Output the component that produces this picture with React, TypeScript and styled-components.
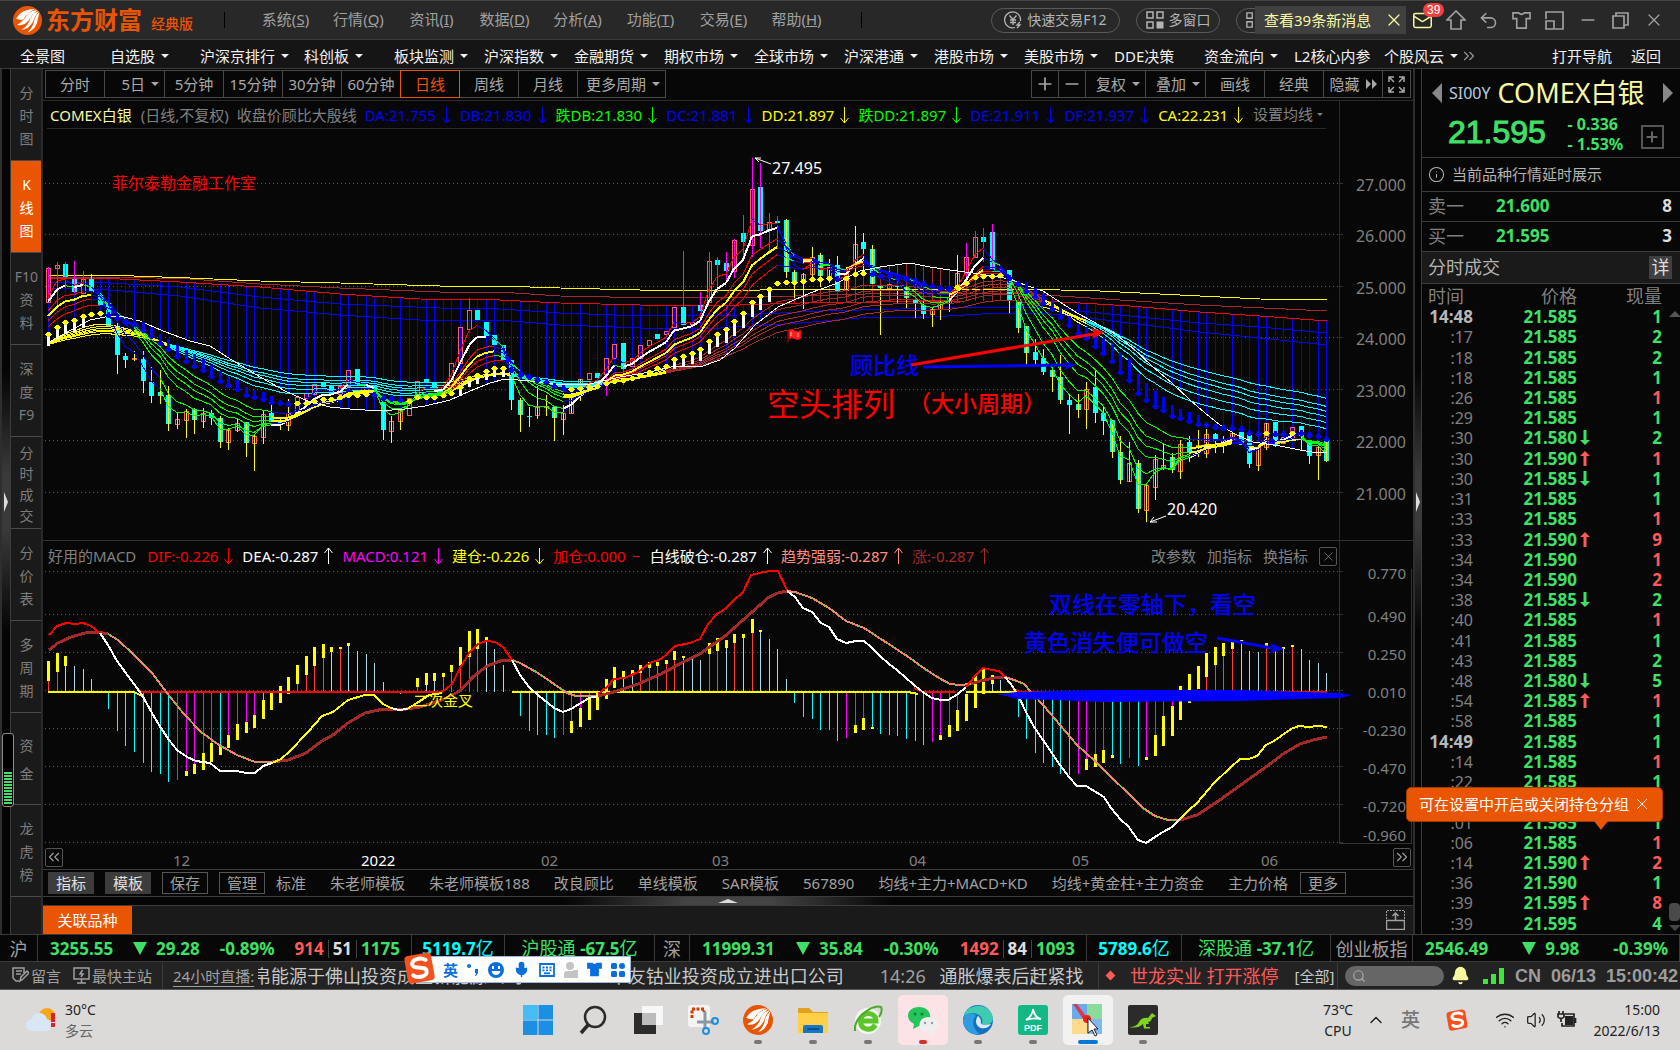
import React from 'react';
import styled, { createGlobalStyle, css } from 'styled-components';
import {
  Undo2, Minus, X, Mail, ChevronsLeft, ChevronsRight,
  Search, Bell, ChevronUp, Wifi, Volume2, Mic, Info, Plus,
} from 'lucide-react';

/* ---------- palette ---------- */
const C = {
  bg: '#070707', bar: '#282828', nav: '#151515', panel: '#1a1a1a', line: '#3c3c3c', dark: '#2a2a2a',
  text: '#c8c8c8', mute: '#808080', mid: '#a0a0a0', orange: '#ea5504', green: '#3fe065', red: '#ff5a5a',
  gold: '#f8f8a0', cyan: '#00ffff', blue: '#0000ff',
};
const FONT = '"Noto Sans", "Noto Sans CJK SC", sans-serif';

const Global = createGlobalStyle`
  * { box-sizing: border-box; }
  html, body { margin: 0; background: ${C.bg}; }
  body { font: 15px/20px ${FONT}; color: ${C.text}; }
  button { font: inherit; color: inherit; background: none; border: 0; padding: 0; margin: 0; white-space: nowrap; cursor: pointer; }
  a { color: inherit; }
  svg { display: block; flex: none; }
`;

const Page = styled.div`display: flex; flex-direction: column; min-height: 100vh; overflow: hidden;`;

/* ---------- title bar ---------- */
const TitleBar = styled.header`
  height: 40px; display: flex; align-items: center; background: ${C.bar};
  border-top: 1px solid #444; border-bottom: 1px solid #3a3a3a; padding: 0 10px 0 13px; color: ${C.mid};
`;
const Brand = styled.div`
  display: flex; align-items: center; gap: 4px; width: 211px; color: ${C.orange};
  b { font-size: 24px; line-height: 30px; }
  small { font-size: 14px; line-height: 18px; margin: 8px 0 0 5px; font-weight: 500; }
`;
const Rule = styled.i`width: 1px; height: 16px; background: #000; flex: none;`;
const Menu = styled.nav`
  display: flex; padding: 0 28px 2px 24px;
  button { width: 73px; }
`;
const Spacer = styled.span`flex: 1;`;
const Pill = styled.button<{ $w: number }>`
  width: ${p => p.$w}px; height: 25px; border: 1px solid #5a5a5a; border-radius: 13px; margin-right: 16px;
  display: flex; align-items: center; justify-content: center; gap: 5px; font-size: 14px; color: #b4b4b4;
`;
const NoticeSlot = styled.div`
  position: relative; width: 170px; height: 28px; display: flex; align-items: center;
  ${Pill} { justify-content: flex-start; padding-left: 9px; }
`;
const Notice = styled.div`
  position: absolute; right: 0; top: 0; width: 151px; height: 28px; background: #404040; color: ${C.gold};
  display: flex; align-items: center; justify-content: space-between; padding: 0 2px 0 9px;
`;
const IconBtn = styled.button`
  width: 33px; height: 30px; display: flex; align-items: center; justify-content: center; position: relative; color: ${C.mid};
`;
const Badge = styled.span`
  position: absolute; left: 17px; top: -2px; padding: 0 4px; border-radius: 7px; background: #f43f3f; color: #fff;
  font: 12px/14px "Liberation Sans", sans-serif;
`;

/* ---------- market nav ---------- */
const NavBar = styled.nav`
  height: 29px; display: flex; align-items: center; background: ${C.nav}; border-bottom: 1px solid ${C.line};
  padding: 3px 19px 0 20px; color: #f0f0f0;
`;
const NavItem = styled.button<{ $w?: number }>`
  width: ${p => p.$w ?? 90}px; display: flex; align-items: center; gap: 6px; flex: none;
`;
const Tri = styled.i<{ $s?: number }>`
  border: ${p => p.$s ?? 4}px solid transparent; border-top-color: currentColor; border-bottom: 0; flex: none;
`;
const NavEnd = styled.div`display: flex; gap: 19px; margin-left: auto;`;

/* ---------- workspace ---------- */
const Body = styled.main`flex: 1; display: flex; background: ${C.bg};`;
const Gutter = styled.div<{ $w: number }>`
  width: ${p => p.$w}px; flex: none; border-left: 2px solid #2e2e2e; border-right: 1px solid ${C.line};
  background: linear-gradient(#050505 35%, #3a3a3a 47%, #3a3a3a 53%, #050505 65%);
  display: flex; flex-direction: column; align-items: center; padding-top: 423px; position: relative;
`;
const Handle = styled.i`border: 10px solid transparent; border-left: 4px solid #ddd; border-right: 0;`;
const Meter = styled.div`
  position: absolute; left: 0; top: 664px; width: 12px; height: 74px; border: 1px solid #8a8a8a; border-radius: 3px;
  background: #000; padding: 38px 1px 2px;
  &::after { content: ''; display: block; height: 100%; background: repeating-linear-gradient(${C.green} 0 2px, #000 2px 3px); }
`;
const Side = styled.aside`width: 32px; flex: none; background: ${C.panel}; border-right: 2px solid ${C.dark};`;
const SideTab = styled.button<{ $on?: boolean; $lh: number }>`
  display: flex; flex-direction: column; align-items: center; justify-content: center; width: 100%; height: 92px;
  border-bottom: 1px solid #4a4a4a; line-height: ${p => p.$lh}px; color: ${p => (p.$on ? '#fff' : '#7d7d7d')};
  background: ${p => (p.$on ? C.orange : 'transparent')}; font-size: 14px; padding: 2px 0 0 1px;
`;
const Center = styled.section`flex: 1; min-width: 0; display: flex; flex-direction: column;`;

const Toolbar = styled.div`height: 32px; display: flex; padding: 1px 2px 3px; justify-content: space-between; border-bottom: 1px solid ${C.dark};`;
const Group = styled.div`display: flex; > * + * { margin-left: -1px; }`;
const Tool = styled.button<{ $w: number; $on?: boolean; $drop?: boolean }>`
  width: ${p => p.$w}px; height: 28px; border: 1px solid ${p => (p.$on ? C.orange : '#484848')};
  color: ${p => (p.$on ? C.orange : '#a8a8a8')}; position: relative; z-index: ${p => (p.$on ? 1 : 0)};
  display: flex; align-items: center; gap: 6px;
  justify-content: ${p => (p.$drop ? 'flex-end' : 'center')}; padding-right: ${p => (p.$drop ? 5 : 0)}px;
`;

const Legend = styled.div<{ $h: number }>`
  height: ${p => p.$h}px; display: flex; flex: none;
`;
const LegendText = styled.div`
  flex: 1; min-width: 0; display: flex; align-items: center; gap: 8px; overflow: hidden; white-space: nowrap;
  padding: 2px 2px 0 5px; border-right: 1px solid ${C.dark}; position: relative;
  > :first-child { margin-right: 3px; }
`;
const Under = styled(LegendText)`
  padding: 0 2px 0 7px;
  > :first-child { margin-right: 1px; }
  &::after { content: ''; position: absolute; left: 4px; right: 13px; bottom: 0; border-bottom: 1px solid ${C.dark}; }
`;
const AxisGap = styled.div`width: 73px; flex: none;`;
const Val = styled.span<{ $c: string }>`
  color: ${p => p.$c}; display: inline-flex; align-items: center; gap: 5px; flex: none;
`;
const MaButton = styled.button`
  position: absolute; right: 0; top: 3px; width: 86px; background: ${C.bg}; color: ${C.mute}; padding-right: 10px;
  display: flex; align-items: center; gap: 4px;
`;
const LegendEnd = styled.div`margin-left: auto; display: flex; align-items: center; gap: 11px; color: ${C.mute};`;
const Square = styled.button`
  width: 18px; height: 19px; border: 1px solid #555; border-radius: 2px; display: flex; align-items: center; justify-content: center;
  color: ${C.mid}; flex: none;
`;
const Plot = styled.svg`
  width: 100%; height: auto; overflow: visible; font-family: ${FONT}; font-size: 15px;
`;
const DateRow = styled.div`height: 26px; display: flex; align-items: center; padding: 1px 2px 0; border-bottom: 1px solid ${C.line};`;
const DatePlot = styled.svg`flex: 1; min-width: 0; height: 24px; overflow: visible; font-family: ${FONT}; font-size: 15px;`;

const Templates = styled.div`
  height: 27px; display: flex; align-items: center; gap: 24px; padding: 0 5px; color: ${C.mid}; border-bottom: 1px solid ${C.line};
`;
const TplGroup = styled.div`display: flex; gap: 11px; margin-right: -13px;`;
const TplBtn = styled.button<{ $fill?: boolean }>`
  width: 46px; height: 22px; line-height: 20px; border: 1px solid ${p => (p.$fill ? C.line : '#555')};
  background: ${p => (p.$fill ? C.line : 'transparent')}; color: ${p => (p.$fill ? '#e0e0e0' : C.mid)};
`;
const MoreBtn = styled(TplBtn)`margin-left: -12px;`;
const HSplit = styled.div`
  height: 9px; display: flex; justify-content: center; align-items: center; border-bottom: 1px solid ${C.line};
  background: linear-gradient(90deg, #050505 38%, #444 47%, #444 53%, #050505 62%);
`;
const Up = styled.i`border: 10px solid transparent; border-bottom: 4px solid #ddd; border-top: 0;`;
const Related = styled.div`
  flex: 1; min-height: 28px; display: flex; align-items: center; justify-content: space-between; background: ${C.panel}; padding-right: 8px;
`;
const RelTab = styled.button`align-self: stretch; width: 89px; background: ${C.orange}; color: #fff;`;

/* ---------- quote panel ---------- */
const Quote = styled.aside`width: 258px; flex: none; display: flex; flex-direction: column; position: relative;`;
const QHead = styled.div`
  height: 89px; border-bottom: 1px solid ${C.line}; padding: 7px 7px 0 10px;
`;
const QName = styled.div`
  display: flex; align-items: center; gap: 7px; color: #b9cbe0; font-size: 16px; height: 34px;
  h1 { margin: 0; font-size: 27px; line-height: 34px; font-weight: 400; color: ${C.gold}; }
`;
const QPrice = styled.div`
  display: flex; align-items: center; justify-content: space-between; padding: 0 9px 0 16px; color: ${C.green};
  strong { font: 32px/45px "Liberation Sans", sans-serif; -webkit-text-stroke: 1px ${C.green}; }
`;
const Change = styled.div`font-weight: 700; font-size: 16px; line-height: 20px; white-space: pre; padding: 3px 0 0 4px;`;
const AddBtn = styled(Square)`width: 23px; height: 24px; border-radius: 0; border-width: 2px; color: #666; margin-top: 8px;`;
const Side2 = styled.i<{ $left?: boolean }>`
  border: 10px solid transparent; flex: none;
  ${p => p.$left ? css`border-right-color: #888; border-left: 0;` : css`border-left-color: #888; border-right: 0; margin-left: auto;`}
`;
const QLine = styled.div<{ $h: number; $bg?: string }>`
  height: ${p => p.$h}px; display: flex; align-items: center; gap: 7px; padding: 0 8px 1px 6px; background: ${p => p.$bg ?? 'transparent'};
  border-bottom: 1px solid ${C.line}; font-size: ${p => (p.$h > 31 ? (p.$bg ? 18 : 15) : 18)}px; color: ${p => (p.$h === 30 ? C.mute : '#b4b4b4')};
  b { font-size: 17px; color: ${C.green}; width: 155px; margin-left: 25px; }
  em { font-style: normal; font-weight: 700; font-size: 17px; color: #ddd; margin-left: auto; }
`;
const Detail = styled.button`margin-left: auto; width: 23px; height: 23px; line-height: 22px; background: #404040; color: #ddd;`;
const TradeWrap = styled.div`flex: 1; display: flex;`;
const Trades = styled.table`
  flex: 1; border-collapse: collapse; table-layout: fixed; line-height: 20px; font-size: 17px; height: 650px;
  th { font-weight: 400; font-size: 18px; color: ${C.mute}; height: 23px; }
  th, td { padding: 0; text-align: right; }
  th:first-child { text-align: left; padding-left: 6px; }
  thead th:nth-child(2) { padding-right: 14px; }
`;
const Time = styled.td<{ $full?: boolean }>`
  font-size: ${p => (p.$full ? 17 : 16)}px; color: ${p => (p.$full ? '#b8b8b8' : C.mute)}; font-weight: ${p => (p.$full ? 700 : 400)};
  width: 51px;
`;
const Price = styled.td`color: ${C.green}; font-weight: 700; width: 118px;
  div { display: flex; align-items: center; justify-content: flex-end; gap: 2px; }
  svg, div > i { width: 12px; }
`;
const Vol = styled.td<{ $up: boolean }>`color: ${p => (p.$up ? C.red : C.green)}; font-weight: 700;`;
const ScrollBar = styled.div`
  width: 18px; display: flex; flex-direction: column; align-items: center; padding: 27px 0 3px 7px; color: #666;
  i:first-child { border: 6px solid transparent; border-bottom-color: #555; border-top: 0; }
  span { width: 11px; height: 18px; border-radius: 4px; background: #4a4a4a; margin-top: auto; }
  i:last-child { border: 6px solid transparent; border-top-color: #444; border-bottom: 0; margin-top: 4px; }
`;
const Tip = styled.div`
  position: absolute; left: -16px; bottom: 112px; width: 257px; height: 35px; border-radius: 5px; background: ${C.orange}; color: #fff;
  display: flex; align-items: center; justify-content: space-between; padding: 0 11px 1px 12px; border: 1px solid #a33b00;
  &::after { content: ''; position: absolute; left: 187px; top: 33px; border: 7px solid transparent; border-top: 9px solid ${C.orange}; border-bottom: 0; }
`;

/* ---------- bottom bars ---------- */
const Ticker = styled.div`
  height: 27px; display: grid; grid-template-columns: 38fr 374fr 93fr 150fr 35fr 397fr 95fr 149fr 82fr 267fr;
  border-top: 1px solid ${C.line}; font-size: 18px; line-height: 26px; white-space: nowrap;
`;
const Cell = styled.div<{ $c?: string }>`
  display: flex; align-items: center; justify-content: center; gap: 6px; border-right: 1px solid ${C.line};
  color: ${p => p.$c ?? C.mid}; min-width: 0;
  b { font-size: 17px; }
`;
const IndexCell = styled(Cell)`justify-content: space-between; padding: 0 11px 0 12px; font-weight: 700; font-size: 17px; color: ${C.green};`;
const Down = styled.span`
  display: inline-flex; align-items: center; gap: 9px;
  &::before { content: ''; border: 7px solid transparent; border-top: 13px solid ${C.green}; border-bottom: 0; }
`;
const Counts = styled.span`
  display: flex; gap: 4px;
  span + span { border-left: 1px solid #444; padding-left: 4px; line-height: 18px; }
  span { line-height: 18px; }
`;
const Tint = styled.span<{ $c: string }>`color: ${p => p.$c};`;

const News = styled.div`
  height: 29px; display: flex; align-items: center; background: #232323; border-top: 1px solid ${C.line}; position: relative;
  color: ${C.mid}; white-space: nowrap; border-bottom: 1px solid #555; padding-right: 2px;
`;
const NewsBtn = styled.button`display: flex; align-items: center; gap: 2px; margin-left: 12px;`;
const Live = styled.a`margin-left: 10px; padding-left: 10px; border-left: 1px solid ${C.line}; line-height: 26px; width: 96px; text-underline-offset: 4px;`;
const Feed = styled.div`
  flex: 1; min-width: 0; overflow: hidden; display: flex; font-size: 18px; line-height: 26px; color: ${C.text};
  span { flex: none; } time { flex: none; color: ${C.mid}; }
  > :first-child { margin-left: -5px; }
`;
const Hot = styled.div`
  display: flex; align-items: center; gap: 16px; width: 240px; padding-left: 8px; border-left: 1px solid ${C.line}; border-right: 1px solid ${C.line};
  color: ${C.red}; font-size: 18px; line-height: 26px;
  i { width: 7px; height: 7px; background: ${C.red}; transform: rotate(45deg); }
  a { font-size: 15px; color: ${C.text}; text-decoration: none; }
`;
const Find = styled.label`
  width: 99px; height: 20px; border-radius: 10px; background: #666; display: flex; align-items: center; margin: 0 7px; padding-left: 7px;
  input { width: 70px; border: 0; background: none; outline: 0; color: #fff; }
`;
const Signal = styled.svg`margin-left: 13px;`;
const Clock = styled.div`display: flex; gap: 10px; margin-left: 10px; font: bold 18px/26px "Liberation Sans", sans-serif; color: #9c9c9c;`;
const Ime = styled.div`
  position: absolute; left: 412px; top: -6px; width: 219px; height: 27px; background: #fff; border: 1px solid #9db9e0;
  display: flex; align-items: center; justify-content: space-between; padding: 0 5px 0 30px; color: #0a6fdc;
  button { font-weight: 700; display: flex; }
`;
const ImeLogo = styled.svg`position: absolute; left: -9px; top: -6px;`;

const Taskbar = styled.footer`
  height: 60px; display: flex; align-items: center; background: #dbdad9; color: #222; font-size: 14px; line-height: 21px;
  justify-content: space-between; padding: 0 20px;
`;
const Weather = styled.div`display: flex; align-items: center; gap: 9px; flex: 1 1 0; svg { margin-left: 6px; } span { color: #666; }`;
const Apps = styled.div`display: flex; gap: 5px; flex: none;`;
const AppBtn = styled.button<{ $bg?: string; $dot?: string }>`
  width: 50px; height: 50px; border-radius: 5px; background: ${p => p.$bg ?? 'transparent'}; position: relative;
  display: flex; align-items: center; justify-content: center;
  &::after {
    content: ''; position: absolute; bottom: 1px; height: 4px; border-radius: 2px; width: ${p => (p.$dot === '#0078d4' ? 20 : 8)}px;
    background: ${p => p.$dot ?? 'transparent'};
  }
`;
const Tray = styled.div`flex: 1 1 0; display: flex; align-items: center; justify-content: flex-end; gap: 11px;`;
const TrayIcons = styled.div`display: flex; gap: 11px; margin-left: 16px;`;
const TrayText = styled.div<{ $right?: boolean; $w: number }>`text-align: ${p => (p.$right ? 'right' : 'center')}; width: ${p => p.$w}px;`;
const TrayIme = styled.b`font-size: 19px; color: #777; margin: 0 15px 0 4px; font-weight: 500;`;

/* ---------- market data ---------- */
// [body top, body bottom, wick top, wick bottom, kind]; kind: r hollow rise, c solid fall, capital = magenta wick
type Bar = [number, number, number, number, string];
const bars: Bar[] = [
  [444,545,440,545,'R'],[436,444,427,560,'R'],[432,472,425,505,'C'],[477,515,423,520,'C'],[477,520,453,495,'R'],[477,515,462,515,'c'],
  [525,555,525,555,'c'],[550,622,550,622,'c'],[618,704,600,762,'c'],[708,720,700,743,'c'],[714,718,692,722,'r'],[716,783,692,820,'c'],
  [786,828,741,849,'c'],[816,827,750,852,'c'],[826,911,798,933,'c'],[898,911,880,927,'r'],[873,900,868,954,'r'],[868,900,864,942,'c'],
  [880,902,864,924,'r'],[880,893,870,915,'c'],[894,966,888,985,'c'],[930,965,924,990,'r'],[909,931,894,936,'r'],[906,969,906,1011,'c'],
  [948,970,942,1052,'r'],[882,952,873,972,'r'],[879,906,855,906,'c'],[900,915,894,930,'c'],[880,916,837,933,'r'],[830,880,830,880,'r'],
  [820,835,820,835,'r'],[793,823,793,823,'r'],[790,800,790,800,'c'],[798,822,798,822,'c'],[797,823,797,823,'r'],[751,797,751,797,'r'],
  [747,796,747,796,'c'],[795,810,795,810,'r'],[794,822,794,822,'c'],[845,930,845,960,'c'],[902,932,887,968,'r'],[870,902,870,930,'r'],
  [835,884,835,884,'r'],[782,835,782,835,'r'],[778,786,778,786,'c'],[786,808,786,808,'c'],[800,812,800,812,'r'],[730,800,730,800,'r'],
  [622,730,622,730,'r'],[571,626,535,571,'R'],[570,600,570,600,'c'],[606,648,606,648,'c'],[645,675,645,675,'c'],[675,720,675,720,'c'],
  [720,840,720,870,'c'],[840,885,834,936,'c'],[887,890,861,921,'c'],[861,886,799,897,'r'],[858,861,825,888,'r'],[861,894,858,963,'c'],
  [880,898,855,945,'r'],[832,880,800,880,'r'],[778,800,778,843,'r'],[760,778,760,778,'r'],[759,774,759,774,'c'],[715,762,760,828,'R'],
  [673,715,673,715,'r'],[669,747,747,795,'C'],[715,738,715,738,'r'],[676,715,676,715,'r'],[661,676,661,676,'r'],[642,656,642,656,'c'],
  [634,643,634,643,'r'],[562,622,562,622,'r'],[560,614,393,560,'C'],[605,612,605,612,'r'],[555,572,516,570,'C'],[424,545,396,545,'R'],
  [420,434,412,520,'C'],[429,453,397,490,'C'],[361,453,357,474,'R'],[339,365,285,422,'C'],[208,374,114,412,'R'],[201,332,129,384,'C'],
  [307,330,279,402,'R'],[303,308,288,388,'C'],[300,456,297,474,'c'],[456,486,450,537,'c'],[462,480,460,566,'r'],[411,462,381,470,'r'],
  [405,468,399,500,'c'],[440,475,417,490,'r'],[435,513,408,515,'c'],[460,510,441,510,'r'],[373,430,318,470,'r'],[366,386,339,450,'c'],
  [387,491,375,491,'c'],[498,503,498,645,'c'],[493,503,493,503,'r'],[496,500,496,548,'c'],[501,535,501,563,'c'],[538,548,538,593,'c'],
  [555,582,540,597,'c'],[568,582,560,620,'r'],[550,566,540,600,'r'],[530,548,520,575,'r'],[460,510,405,515,'r'],[411,460,369,500,'R'],
  [351,411,333,415,'R'],[351,365,324,425,'C'],[336,450,312,450,'C'],[452,456,435,475,'C'],[450,540,450,579,'c'],[543,624,543,638,'c'],
  [617,699,617,735,'c'],[696,720,657,732,'c'],[714,755,687,765,'c'],[750,771,742,816,'c'],[771,840,705,852,'c'],[840,855,822,942,'c'],
  [852,870,822,894,'c'],[808,868,787,927,'r'],[801,879,753,909,'c'],[879,903,858,945,'c'],[899,996,899,1014,'c'],[996,1080,948,1092,'c'],
  [1030,1084,966,1086,'r'],[1028,1166,1020,1179,'c'],[1095,1171,1095,1205,'r'],[1018,1100,1005,1140,'r'],[1036,1040,972,1050,'r'],
  [1010,1050,999,1058,'c'],[973,1052,960,1077,'r'],[966,996,948,1026,'c'],[975,978,930,1010,'r'],[943,998,927,1014,'r'],[942,960,940,1000,'c'],
  [960,975,948,1000,'r'],[940,960,935,960,'r'],[936,975,936,975,'c'],[945,1032,945,1044,'c'],[980,1034,980,1053,'r'],[910,980,910,990,'r'],
  [905,975,905,980,'c'],[950,970,950,970,'r'],[922,960,922,960,'r'],[918,950,918,990,'c'],[963,1007,963,1032,'c'],[980,1005,980,1080,'r'],
  [962,1023,960,1026,'c'],
];
const X0 = 48.3, STEP = 8.577;
const px = (i: number) => Math.round(X0 + STEP * i);
const py = (v: number) => Math.round(120 + v / 3);
const closes = bars.map(b => (b[4].toLowerCase() === 'r' ? b[0] : b[1]));
const ema = (n: number, seed: number) => {
  let e = seed; const k = 2 / (n + 1);
  return closes.map((c, i) => (i === 0 ? e : (e = c * k + e * (1 - k))));
};
const shortLines = ([[3, 530], [5, 545], [8, 572], [10, 588], [12, 602], [15, 620]] as const).map(([n, s]) => ema(n, s));
const longLines = ([[30, 668], [35, 669], [40, 670], [45, 671], [50, 672], [60, 674]] as const).map(([n, s]) => ema(n, s));

// trend markers, one number per bar; dots with a stem
const marks = [
  641,622,606,600,588,582,579,585,595,605,612,630,648,668,688,708,723,738,749,767,782,795,807,826,831,838,845,848,852,848,850,842,838,838,
  830,825,825,822,825,833,838,840,842,832,830,832,825,818,800,775,765,752,744,744,750,765,772,780,787,798,805,806,803,801,798,790,783,780,
  773,766,757,745,737,718,708,698,686,663,641,627,602,578,545,527,507,489,486,486,483,477,477,474,477,475,463,460,463,468,468,473,477,483,
  492,497,503,508,500,490,470,468,468,465,475,492,512,532,548,568,592,615,638,655,678,698,722,757,780,818,840,858,870,888,895,903,913,915,
  922,925,925,927,939,942,940,942,942,940,940,946,948,957,
];
const downRanges = [[7, 28], [38, 41], [54, 60], [92, 92], [96, 105], [112, 141], [143, 144], [146, 149]];
const isDown = (i: number) => downRanges.some(([a, b]) => i >= a && i <= b);
const stem = (i: number) => {
  if (i >= 10 && i <= 26) return 36 - Math.abs(17 - i) * 2;
  if (i >= 114 && i <= 134) return 28 + Math.max(0, 34 - Math.abs(126 - i) * 6);
  if (i < 5) return 36;
  if (i >= 48 && i <= 53) return 26;
  if (i >= 73 && i <= 84) return 46 - Math.abs(81 - i) * 2;
  return 8;
};

type Pt = [number, number];
const pts = (s: string): Pt[] => s.split(' ').map(p => p.split(',').map(Number) as Pt);
const at = (line: Pt[], x: number) => {
  for (let i = 1; i < line.length; i++) if (x <= line[i][0]) {
    const [a, b] = line[i - 1], [c, d] = line[i];
    return b + ((d - b) * (x - a)) / (c - a);
  }
  return line[line.length - 1][1];
};
const white = pts('48,343 60,336 75,328 90,320 105,317 120,316 140,321 163,331 190,341 210,346 235,362 262,378 285,391 310,402 330,407 350,409 380,411 405,409 425,406 450,400 470,391 490,383 505,379 530,381 560,385 590,384 620,377 650,372 675,366 700,367 720,360 735,348 755,325 778,307 810,293 835,284 860,271 880,267 910,263 930,267 950,270 980,274 1010,279 1025,285 1043,291 1060,302 1077,313 1092,321 1117,335 1135,350 1153,367 1172,383 1190,400 1205,413 1220,425 1235,434 1253,442 1280,446 1300,450 1312,452 1327,452');
const redLong = pts('48,278 120,279 180,282 260,287 340,294 420,299 500,300 560,303 640,305 700,306 740,305 800,303 880,302 960,301 1040,301 1080,303 1130,306 1200,312 1260,316 1327,321');
const yellowLong = '48,275.5 120,275.500 190,278 260,281 340,283 440,286 500,286 560,288 640,290 760,290 900,289.500 1000,289.500 1060,290 1100,291 1140,293 1200,296 1260,299 1327,300';
const longPaths: [string, string][] = [
  ['#a52a2a', '48,277 120,277 190,279 260,284 340,288 440,292 500,292 560,296 660,298 760,297 900,293 1000,293 1060,296 1120,300 1200,305 1327,311'],
  ['#0000ff', '48,282 110,283 180,287 260,297 340,304 440,308 500,309 560,313 640,316 740,315 820,311 900,309 960,307 1040,307 1100,313 1160,319 1200,323 1260,327 1327,333'],
  ['#0000ff', '48,288 110,290 180,296 260,308 340,315 420,320 500,320 560,325 640,328 720,328 800,323 860,318 930,317 1000,313 1040,313 1080,317 1130,323 1200,332 1260,338 1327,345'],
];

// MACD histogram: [index, tip, colour, highlight from, highlight to]
const hist: [number, number, string, number?, number?][] = [
  [0,363,'r',363,422],[1,339,'r',339,395],[2,348,'l',348,377],[3,378,'l'],[4,387,'l'],[5,417,'l'],[7,507,'c'],[8,573,'c'],[9,618,'c'],
  [10,636,'c'],[11,669,'c'],[12,696,'c'],[13,702,'c'],[14,726,'c'],[15,720,'m'],[16,708,'m',693,708],[17,702,'m',672,702],[18,690,'m',639,690],
  [19,666,'m',609,666],[20,645,'c',618,645],[21,624,'m',585,624],[22,600,'m',552,600],[23,579,'m',546,579],[24,564,'m',525,564],
  [25,537,'c',480,537],[26,510,'c',458,510],[27,489,'y',437,489],[28,410,'y',410,462],[29,375,'r',375,432],[30,348,'r',348,405],
  [31,321,'r',321,378],[32,312,'r',312,354],[33,321,'l',321,336],[34,321,'r',321,324],[35,309,'l',309,318],[36,333,'l'],[37,342,'l'],
  [38,369,'l'],[39,426,'l'],[41,462,'c'],[43,414,'r',414,441],[44,399,'l',399,435],[45,399,'l',399,423],[46,399,'r',399,411],[47,375,'r',375,396],
  [48,321,'r',321,378],[49,273,'r',273,350],[50,267,'r',267,327],[51,291,'l',291,303],[52,327,'l'],[53,375,'l'],[55,528,'c'],[56,573,'c'],
  [57,585,'c'],[58,585,'c'],[59,594,'c'],[60,585,'m'],[61,579,'m',543,579],[62,561,'m',504,561],[63,540,'m',477,540],[64,510,'m',458,510],
  [65,417,'y',417,477],[66,381,'y',381,444],[67,393,'l',393,417],[68,390,'l',390,405],[69,375,'r',375,400],[70,366,'r',366,385],
  [71,366,'r',366,378],[72,360,'r',360,372],[73,333,'r',333,360],[74,348,'l',348,354],[75,357,'l'],[76,360,'l'],[77,309,'r',309,342],
  [78,294,'r',294,333],[79,300,'l',300,324],[80,282,'r',282,309],[81,282,'l',282,294],[82,237,'r',237,279],[83,270,'l',270,276],[84,297,'l'],
  [85,327,'l'],[86,417,'l'],[87,489,'c'],[88,531,'c'],[89,537,'c'],[90,570,'c'],[91,570,'c'],[92,603,'c'],[93,594,'m'],[94,579,'m',555,579],
  [95,570,'m',534,570],[96,567,'c',561,567],[97,582,'c'],[98,585,'c'],[99,588,'c'],[100,597,'c'],[101,603,'c'],[102,615,'c'],[103,606,'m'],
  [104,600,'m',585,600],[105,591,'m',555,591],[106,573,'m',510,573],[107,543,'y',461,543],[108,504,'y',408,504],[109,381,'y',381,462],
  [110,405,'l',405,432],[111,420,'l'],[113,531,'c'],[114,597,'c'],[115,639,'c'],[116,669,'c'],[117,681,'c'],[118,702,'c'],[119,705,'c'],
  [120,702,'m'],[121,690,'m',657,690],[122,681,'m',642,681],[123,669,'m',630,669],[124,654,'c',645,654],[125,672,'c'],[126,654,'m'],
  [127,678,'c'],[128,660,'m',651,660],[129,648,'m',585,648],[130,618,'m',528,618],[131,588,'m',498,588],[132,540,'y',438,540],
  [133,402,'y',402,489],[134,378,'y',378,447],[135,339,'r',339,411],[136,321,'r',321,375],[137,309,'r',309,348],[138,306,'r',306,327],
  [139,300,'l',300,306],[140,333,'l'],[141,336,'l'],[142,309,'r',309,318],[143,318,'l',318,324],[144,321,'l',321,324],[145,315,'r',315,321],
  [146,327,'l'],[147,360,'l'],[148,369,'l'],[149,399,'l'],
];
const histColor: Record<string, string> = { r: '#ff3c3c', l: '#add8e6', c: '#00ffff', m: '#ff00ff', y: '#ffff00' };
const my = (v: number) => Math.round(540 + v / 3);

const dif: [string, string][] = [
  ['#f00', '49,635 57,626 66,623 75,624 83,623 91,626 100,633'],
  ['#fff', '100,633 108,645 117,661 134,684 142,695 152,713 159,725 169,740 177,750 187,757 196,761 210,763 220,771 237,771 246,773 255,773 263,766 272,763'],
  ['#ff0', '272,763 281,759 290,751 308,732 322,716 333,712 348,700 365,695 374,695 383,704 391,708'],
  ['#fff', '391,708 399,710 407,709'],
  ['#ff0', '407,709 417,703 429,695 442,693'],
  ['#f00', '442,692 452,684 460,668 469,653 478,644 486,641 495,642 503,647 512,660'],
  ['#fff', '512,660 520,675 529,687 538,695 554,708 563,712 571,709 589,698 598,696'],
  ['#f00', '598,694 607,687 614,679 625,678 638,672 650,663 661,659 668,653 675,646 690,643 700,639 708,624 717,614 725,609 734,600 743,592 751,575 760,573 769,571 778,571 787,590'],
  ['#fff', '787,591 795,597 803,608 812,612 821,623 829,627 837,639 846,643 856,641 864,641 871,647 880,656 889,664 897,670 914,685 924,693 932,698 941,700 948,700 958,694 966,687'],
  ['#f00', '966,687 975,676 983,668 992,670 999,671 1005,677'],
  ['#fff', '1005,677 1010,683 1017,693 1026,712 1034,727 1043,740 1060,765 1069,777 1077,786 1086,786 1104,797 1111,808 1121,820 1128,826 1138,840 1146,843 1155,837 1163,832 1172,827 1180,819'],
  ['#ff0', '1180,819 1189,810 1197,803 1214,783 1231,767 1240,759 1249,759 1257,756 1266,745 1274,741 1291,729 1299,726 1308,727 1318,726 1327,727'],
];
const deaUp = [
  '49,650 58,643 71,637 85,633 98,632 108,634',
  '272,762 288,760 306,753 322,741 333,735 348,723 365,713 383,709 406,709 420,707 442,700 460,691 473,677 487,666 503,660 512,660',
  '598,696 614,692 638,684 661,674 683,662 700,654 708,648 725,636 743,620 760,605 769,597 778,593 787,591',
  '971,684 980,681 994,678 1005,677',
  '1180,820 1197,815 1214,804 1231,792 1249,779 1266,767 1283,754 1300,744 1313,740 1327,737',
];
const deaDown = [
  '108,634 118,640 134,655 152,673 167,693 183,713 201,732 219,745 237,755 255,762 272,762',
  '512,660 520,663 538,673 554,684 567,693 576,696 589,696 598,696',
  '787,591 795,592 812,598 829,608 846,621 864,628 884,641 907,656 925,669 939,678 950,684 959,685 971,684',
  '1005,677 1017,681 1024,684 1031,692 1044,706 1060,725 1077,745 1095,761 1111,777 1129,794 1143,808 1155,816 1168,820 1180,820',
];

/* ---------- small drawings ---------- */
const Arrow = ({ dir }: { dir: string }) => (
  <svg width="11" height="18" viewBox="0 0 11 18" fill="none" stroke="currentColor">
    {dir === 'd' && <path d="M5.500 1v16M1.500 12l4 5 4-5" />}
    {dir === 'u' && <path d="M5.500 17V1M1.500 6l4-5 4 5" />}
    {dir === '-' && <path d="M2 9.500h7" />}
  </svg>
);
const TradeArrow = ({ up }: { up: boolean }) => (
  <svg width="10" height="16" viewBox="0 0 10 16" fill={up ? C.red : C.green}>
    {up ? <path d="M5 0l5 5H6.500v10h-3V5H0z" /> : <path d="M5 15l5-5H6.500V0h-3v10H0z" />}
  </svg>
);
const Swirl = ({ s }: { s: number }) => (
  <svg width={s} height={s} viewBox="0 0 28 28">
    <circle cx="14" cy="14" r="14" fill={C.orange} />
    <g fill="#fff">
      <path d="M3 12Q8 3 22 3Q14 6 10 13Q6 14 3 12z" />
      <path d="M4 18Q10 15 14 8Q18 4 23.500 4Q18 8 15 14Q10 20 4 18z" />
      <path d="M8 23Q15 19 17 11Q20 6 25 5Q21 9 19.500 15Q15 23 8 23z" />
      <path d="M14 25.500Q20 20 21 12Q22.500 8 25.500 6Q24 12 23 17Q20 24 14 25.500z" />
    </g>
  </svg>
);
const ShirtIcon = ({ fill = 'none', s = 20 }: { fill?: string; s?: number }) => (
  <svg width={s} height={s} viewBox="0 0 20 20" fill={fill} stroke="currentColor" strokeWidth="1.700">
    <path d="M1 2h6q3 3 6 0h6v6h-4v10H5V8H1z" />
  </svg>
);
const SogouPath = () => (
  <path d="M23 8C18 4 8 5 9 11C10 16 22 13 22 19C22 25 12 25 8 21" fill="none" stroke="#fff" strokeWidth="4" strokeLinecap="round" />
);
const Sogou = ({ s }: { s: number }) => (
  <svg width={s} height={s} viewBox="0 0 30 30"><g transform="rotate(-10 15 15)"><rect x="2" y="2" width="26" height="26" rx="5" fill="#f4511e" /><SogouPath /></g></svg>
);

/* ---------- charts ---------- */
const Grid = ({ ys, labels, size }: { ys: number[]; labels: string[]; size: number }) => (
  <g>
    {ys.map((y, i) => (
      <g key={y}>
        <line x1="45" x2="1339" y1={y + 0.5} y2={y + 0.5} stroke="#555" strokeDasharray="1 3" />
        <line x1="1340" x2="1343" y1={y + 0.5} y2={y + 0.5} stroke="#333" />
        <text x="1406" y={Math.min(y + 8, 841)} fill={C.mute} textAnchor="end" fontSize={size}>{labels[i]}</text>
      </g>
    ))}
  </g>
);

const shortColor = (k: number, i: number) => {
  const line = shortLines[k], up = line[i] < line[i - 1], above = line[i] < longLines[2][i];
  if (!above) {
    if ((i > 26 && i < 39) || (i > 60 && i < 66)) return ['#0000ff', '#ffffff', '#0000ff', '#ffff00', '#ffff00', '#0000ff'][k];
    if (i > 133 && i < 147) return up ? ['#0000ff', '#ffffff', '#0000ff', '#ffff00', '#ffff00', '#0000ff'][k] : '#0000ff';
    return k < 2 && i < 14 ? '#0000ff' : '#00ff00';
  }
  if (!up) return k % 3 === 1 && i % 2 ? '#00ff00' : '#0000ff';
  return ['#ff0000', '#ffffff', '#ff0000', '#ffff00', '#ff0000', '#ff0000'][k];
};
const longColor = (i: number) =>
  i < 15 ? '#ffff00' : i < 47 ? '#00ffff' : i < 55 ? '#ffff00' : i < 66 ? '#00ffff' : i < 73 ? '#ffff00' : i < 117 ? '#a52a2a' : i < 122 ? '#ffff00' : '#00ffff';

const KLine = () => (
  <Plot viewBox="43 129 1370 412" role="img" aria-label="COMEX白银 日线">
    <g shapeRendering="crispEdges">
      <Grid size={16} ys={[183, 234, 286, 337, 389, 440, 492]} labels={['27.000', '26.000', '25.000', '24.000', '23.000', '22.000', '21.000']} />
      <line x1="1339.5" x2="1339.5" y1="129" y2="541" stroke="#2a2a2a" />
      <line x1="43" x2="1413" y1="540.5" y2="540.5" stroke="#333" />
      {bars.map((_, i) => {
        const x = px(i), a = at(redLong, x), b = at(white, x);
        return <line key={i} x1={x + 0.5} x2={x + 0.5} y1={a} y2={b} stroke={a > b ? '#a52a2a' : '#0000ff'} />;
      })}
      {longPaths.map(([c, p], k) => <polyline key={k} points={p} fill="none" stroke={c} />)}
      <polyline points={yellowLong} fill="none" stroke="#ffff00" />
      <polyline points={redLong.join(' ')} fill="none" stroke="#ff0000" />
      {bars.map(([t, b, h, l, k], i) => {
        const x = px(i), rise = k.toLowerCase() === 'r', wick = k < 'a' ? '#ff00ff' : '#ffff00';
        const top = py(t), height = Math.max(1, py(b) - top);
        return (
          <g key={i}>
            {rise
              ? <rect x={x - 1.5} y={top + 0.5} width="4" height={height} fill="none" stroke="#ff6060" />
              : <rect x={x - 2} y={top} width="5" height={height} fill="#00ffff" />}
            {(h < t || l > b) && <line x1={x + 0.5} x2={x + 0.5} y1={py(h)} y2={py(l)} stroke={wick} />}
          </g>
        );
      })}
      {longLines.map((line, k) => line.slice(1).map((v, j) => (
        <line key={`${k}-${j}`} x1={px(j)} x2={px(j + 1)} y1={120 + line[j] / 3} y2={120 + v / 3} stroke={longColor(j + 1)} />
      )))}
      {shortLines.map((line, k) => line.slice(1).map((v, j) => {
        const c = shortColor(k, j + 1), bold = c === '#ffffff' || c === '#ffff00';
        return <line key={`${k}-${j}`} x1={px(j)} x2={px(j + 1)} y1={120 + line[j] / 3} y2={120 + v / 3} stroke={c} strokeWidth={bold ? 2 : 1} />;
      }))}
      <polyline points={white.join(' ')} fill="none" stroke="#fff" />
      {marks.map((v, i) => {
        const x = px(i), y = py(v), down = isDown(i), s = Math.round(stem(i) / 3);
        return (
          <g key={i} fill={down ? '#0000ff' : '#ffff00'}>
            <rect x={x - 1} y={down ? y - s : y} width="3" height={s} fill={down ? '#0000ff' : '#ffffff'} />
            <rect x={x - 2} y={y - 1} width="5" height="3" />
            <rect x={x - 3} y={y} width="7" height="1" />
            <rect x={x - 1} y={y - 2} width="3" height="5" />
          </g>
        );
      })}
    </g>
    <path d="M771 164l-16-6m6 0l-6 0 4 4M1166 516l-16 6m7 0h-7l4-5" stroke="#fff" fill="none" />
    <text x="772" y="174" fill="#fff" fontSize="16">27.495</text>
    <text x="1167" y="515" fill="#fff" fontSize="16">20.420</text>
    <text x="112" y="189" fill="#ff0000" fontSize="16">菲尔泰勒金融工作室</text>
    <path d="M788 330v12M789 330q4-2 6 1q3 2 6-1v8q-3 3-6 1q-3-2-6 0z" fill="#ff2020" stroke="#c00" />
    <path d="M791 332v4M798 333v4" stroke="#ffb0b0" />
    <text x="850" y="374" fill="#0000ff" fontSize="23" fontWeight="500">顾比线</text>
    <path d="M911 365L1094 334" stroke="#ff0000" strokeWidth="3" />
    <path d="M1105 332l-14-4 3 5-2 6z" fill="#ff0000" />
    <path d="M923 367L1066 365" stroke="#0000ff" strokeWidth="3" />
    <path d="M1076 365l-12-4 3 4-3 5z" fill="#0000ff" />
    <text x="767" y="416" fill="#ff0000" fontSize="32">空头排列</text>
    <text x="908" y="412" fill="#ff0000" fontSize="23" fontWeight="500">（大小周期）</text>
  </Plot>
);

const Macd = () => (
  <Plot viewBox="43 569 1370 275" role="img" aria-label="MACD">
    <g shapeRendering="crispEdges">
      <Grid size={15} ys={[571, 614, 652, 690, 728, 766, 804, 842]} labels={['0.770', '0.490', '0.250', '0.010', '-0.230', '-0.470', '-0.720', '-0.960']} />
      <path d="M1339.500 569V843.500H1411.500V569" fill="none" stroke="#333" />
      {hist.map(([i, tip, c, a, b]) => (
        <g key={i}>
          {c !== 'y' && <line x1={px(i) + 0.5} x2={px(i) + 0.5} y1={my(tip)} y2="692" stroke={histColor[c]} />}
          {a !== undefined && b !== undefined && <rect x={px(i) - 1} y={my(a)} width="3" height={Math.max(2, my(b) - my(a))} fill="#ffff00" />}
        </g>
      ))}
      <path d="M48 692H134L142 696M512 692H908L918 694M966 692H1017" stroke="#ffff00" strokeWidth="2" fill="none" />
      <path d="M137 688L142 692H442M914 688L922 692H955M1012 688L1020 692H1327" stroke="#ff0000" strokeWidth="2" fill="none" />
    </g>
    <g fill="none" strokeLinejoin="round" shapeRendering="crispEdges">
      {deaUp.map(p => <polyline key={p} points={p} stroke="#a52a2a" strokeWidth="3" />)}
      {deaDown.map(p => <polyline key={p} points={p} stroke="#fa8072" strokeWidth="2" />)}
      {deaDown.map(p => <polyline key={p} points={p} stroke="#40e020" strokeWidth="1" strokeDasharray="3 5" />)}
      {dif.map(([c, p]) => <polyline key={p} points={p} stroke={c} strokeWidth="2" />)}
    </g>
    <text x="413" y="706" fill="#ffff00">二次金叉</text>
    <path d="M998 694L1017 692 1054 691 1103 690H1240L1340 693 1352 695 1340 698 1240 701 1103 702 1054 700 1017 699z" fill="#0000ff" />
    <text x="1049" y="613" fill="#0000ff" fontSize="23" fontWeight="500">双线在零轴下，看空</text>
    <text x="1024" y="651" fill="#0000ff" fontSize="23" fontWeight="500">黄色消失便可做空</text>
    <path d="M1217 638L1272 648" stroke="#0000ff" strokeWidth="3" />
    <path d="M1284 649l-13-6 2 5-3 5z" fill="#0000ff" />
  </Plot>
);

/* ---------- content ---------- */
const menus = [['系统', 'S'], ['行情', 'Q'], ['资讯', 'I'], ['数据', 'D'], ['分析', 'A'], ['功能', 'T'], ['交易', 'E'], ['帮助', 'H']];
const navs: [string, boolean, number?][] = [
  ['全景图', false], ['自选股', true], ['沪深京排行', true, 104], ['科创板', true], ['板块监测', true], ['沪深指数', true], ['金融期货', true],
  ['期权市场', true], ['全球市场', true], ['沪深港通', true], ['港股市场', true], ['美股市场', true], ['DDE决策', false], ['资金流向', true],
  ['L2核心内参', false], ['个股风云', true, 76],
];
const sides: [string[], number][] = [
  [['分', '时', '图'], 23], [['K', '线', '图'], 23], [['F10', '资', '料'], 23], [['深', '度', 'F9'], 23], [['分', '时', '成', '交'], 21],
  [['分', '价', '表'], 23], [['多', '周', '期'], 23], [['资', '金'], 28], [['龙', '虎', '榜'], 23],
];
const periods: [string, number, boolean?][] = [
  ['分时', 60], ['5日', 61, true], ['5分钟', 60], ['15分钟', 60], ['30分钟', 60], ['60分钟', 60], ['日线', 60], ['周线', 60], ['月线', 60], ['更多周期', 89, true],
];
const maVals: [string, string][] = [
  ['DA:21.755', C.blue], ['DB:21.830', C.blue], ['跌DB:21.830', '#00ff00'], ['DC:21.881', C.blue], ['DD:21.897', '#ffff00'], ['跌DD:21.897', '#00ff00'],
  ['DE:21.911', C.blue], ['DF:21.937', C.blue], ['CA:22.231', '#ffff00'],
];
const macdVals: [string, string, string][] = [
  ['DIF:-0.226', '#ff0000', 'd'], ['DEA:-0.287', '#ffffff', 'u'], ['MACD:0.121', '#ff00ff', 'd'], ['建仓:-0.226', '#ffff00', 'd'],
  ['加仓:0.000', '#ff0000', '-'], ['白线破仓:-0.287', '#ffffff', 'u'], ['趋势强弱:-0.287', '#ff9080', 'u'], ['涨:-0.287', '#a52a2a', 'u'],
];
const dates: [string, number][] = [['12', 173], ['2022', 361], ['02', 541], ['03', 712], ['04', 909], ['05', 1072], ['06', 1261]];
const templates = ['标准', '朱老师模板', '朱老师模板188', '改良顾比', '单线模板', 'SAR模板', '567890', '均线+主力+MACD+KD', '均线+黄金柱+主力资金', '主力价格'];
const trades: [string, string, string, number, boolean][] = [
  ['14:48', '21.585', '', 1, false], [':17', '21.585', '', 2, false], [':18', '21.585', '', 2, false], [':18', '21.585', '', 1, false],
  [':26', '21.585', '', 1, true], [':29', '21.585', '', 1, false], [':30', '21.580', 'd', 2, false], [':30', '21.590', 'u', 1, true],
  [':30', '21.585', 'd', 1, false], [':31', '21.585', '', 1, false], [':33', '21.585', '', 1, true], [':33', '21.590', 'u', 9, true],
  [':34', '21.590', '', 1, true], [':34', '21.590', '', 2, true], [':38', '21.585', 'd', 2, false], [':40', '21.585', '', 1, true],
  [':41', '21.585', '', 1, false], [':43', '21.585', '', 2, false], [':48', '21.580', 'd', 5, false], [':54', '21.585', 'u', 1, true],
  [':58', '21.585', '', 1, false], ['14:49', '21.585', '', 1, false], [':14', '21.585', '', 1, true], [':22', '21.585', '', 1, false],
  [':30', '21.585', '', 1, false], [':01', '21.585', '', 1, false], [':06', '21.585', '', 1, true], [':14', '21.590', 'u', 2, true],
  [':36', '21.590', '', 1, false], [':39', '21.595', 'u', 8, true], [':39', '21.595', '', 4, false],
];

const GridIcon = ({ s = 18 }: { s?: number }) => (
  <svg width={s} height={s} viewBox="0 0 18 18" fill="none" stroke="currentColor" strokeWidth="1.5">
    <path d="M1 1h6v6H1zM11 1h6v6h-6zM1 11h6v6H1z" /><path d="M10.500 10.500h7v7h-7z" fill="currentColor" stroke="none" />
  </svg>
);

const apps: { name: string; bg?: string; dot?: string; icon: React.ReactNode }[] = [
  { name: '开始', icon: <svg width="30" height="30" viewBox="0 0 30 30"><path d="M0 0h14.500v14.500H0zM15.500 0H30v14.500H15.500zM0 15.500h14.500V30H0zM15.500 15.500H30V30H15.500z" fill="#1a8fe3" /><path d="M0 0h14.500v14.500H0z" fill="#45bdf3" /></svg> },
  { name: '搜索', icon: <svg width="30" height="30" viewBox="0 0 30 30" fill="none" stroke="#2a2a2a"><circle cx="17" cy="12" r="10" strokeWidth="2.500" /><path d="M10 20L3 28" strokeWidth="3.500" /></svg> },
  { name: '任务视图', icon: <svg width="30" height="30" viewBox="0 0 30 30"><path d="M1 8h22v21H1z" fill="#2c2c2c" /><path d="M9 1h21v19H9z" fill="#fafafa" opacity=".9" /><path d="M9 8h14v12H9z" fill="#bcbcbc" /></svg> },
  { name: '截图工具', icon: <svg width="32" height="32" viewBox="0 0 32 32" fill="none"><rect x="1" y="1" width="22" height="22" rx="3" fill="#f4f4f4" /><path d="M5 14V5h12v3" stroke="#d83b01" strokeWidth="3" strokeDasharray="3 1.500" /><path d="M18 8v17M10 18h17" stroke="#8a9aa5" strokeWidth="3" /><circle cx="19" cy="27" r="3" stroke="#1a8fe3" strokeWidth="2" /><circle cx="28" cy="17" r="3" stroke="#1a8fe3" strokeWidth="2" /></svg> },
  { name: '东方财富', dot: '#777', icon: <Swirl s={30} /> },
  { name: '文件资源管理器', dot: '#777', icon: <svg width="30" height="30" viewBox="0 0 30 30"><path d="M0 3h11l4 4h15v21H0z" fill="#e0a020" /><path d="M0 8h30v20H0z" fill="#ffcf48" /><path d="M5 28v-6q0-2 2-2h16q2 0 2 2v6z" fill="#1677c8" /><path d="M9 23h12v2H9z" fill="#0b4f8c" /></svg> },
  { name: '360浏览器', dot: '#777', icon: <svg width="32" height="32" viewBox="0 0 32 32" fill="none"><circle cx="16" cy="17" r="13" fill="#f2faec" /><path d="M8 17h16c0-10-15-10-15.500 0c0 10 11 10 15 4" stroke="#5cc52c" strokeWidth="5" /><path d="M3 27Q2 17 12 9Q22 1 29 3Q31 7 27 13" stroke="#4aa82a" strokeWidth="2" /></svg> },
  { name: '微信', bg: '#fbe3e6', dot: '#d32f2f', icon: <svg width="32" height="32" viewBox="0 0 32 32"><path d="M12 3c15 0 15 19 0 19l-6 3 1-5C-3 15 0 3 12 3z" fill="#25c45c" /><path d="M21 13c12 0 13 12 5 15l1 3-5-2c-13 0-12-16-1-16z" fill="#efefef" /><g fill="#167a3a"><circle cx="8" cy="10" r="1.500" /><circle cx="15" cy="10" r="1.500" /></g><g fill="#999"><circle cx="18" cy="19" r="1.200" /><circle cx="25" cy="19" r="1.200" /></g></svg> },
  { name: 'Edge', dot: '#777', icon: <svg width="32" height="32" viewBox="0 0 32 32"><circle cx="16" cy="16" r="15" fill="#1670c0" /><path d="M2 12C6-2 28-2 31 14c0 6-6 8-11 6 3-10-10-14-18-8z" fill="#3ecbb0" /><path d="M19 17c-1 3 2 5 10 3c-3 6-14 6-15-2c0-3 1-5 2-6q3 2 3 5z" fill="#dbeaf0" /><path d="M1 16C2 8 12 8 14 12c-5 4-3 14 4 18C8 32 1 25 1 16z" fill="#2f9be0" /></svg> },
  { name: 'PDF', dot: '#777', icon: <svg width="30" height="30" viewBox="0 0 30 30"><rect width="30" height="30" rx="3" fill="#12b886" /><path d="M8 15c4-2 7-7 7-11 1 5 3 9 8 10-5-1-10-1-15 1z" fill="none" stroke="#fff" strokeWidth="1.800" /><text x="15" y="26" fill="#fff" fontSize="9" fontWeight="700" textAnchor="middle" fontFamily="Liberation Sans">PDF</text></svg> },
  { name: '画图', bg: '#f2f2f2', dot: '#0078d4', icon: <svg width="34" height="34" viewBox="0 0 34 34"><path d="M1 1h15v15H1z" fill="#6aa9ea" /><path d="M16 1h15v15H16z" fill="#8bdc9a" /><path d="M1 16h15v15H1z" fill="#ffd98c" /><path d="M16 16h15v15H16z" fill="#7fb8ee" /><path d="M2 1h4l11 15-3 3z" fill="#d43a50" /><circle cx="16" cy="16" r="4" fill="#f02020" /><path d="M17 15v15l4-3 3 6 2-1-3-6h4z" fill="#fff" stroke="#222" /></svg> },
  { name: '袋鼠', dot: '#777', icon: <svg width="30" height="30" viewBox="0 0 30 30"><rect width="30" height="30" rx="2" fill="#2b2b2b" /><path d="M1 22Q9 22 11 17Q14 12 20 13L24 8L28 11L24 13Q23 17 20 17L21 19L18 19L18 22H22V23.500H16L15 19Q10 24 1 22z" fill="#7fd321" /></svg> },
];

export default function App() {
  return (
    <Page>
      <Global />
      <TitleBar>
        <Brand><Swirl s={29} /><b>东方财富</b><small>经典版</small></Brand>
        <Rule />
        <Menu>{menus.map(([n, k]) => <button key={k}>{n}(<u>{k}</u>)</button>)}</Menu>
        <Rule />
        <Spacer />
        <Pill $w={129}>
          <svg width="18" height="18" viewBox="0 0 18 18" fill="none" stroke="currentColor" strokeWidth="1.300"><path d="M11 16.500A8 8 0 1 1 16.500 10M5.500 4.500L9 8.500l3.500-4M9 8.500V14M6 9h6M6 11.500h6M16 11l-3 3h3l-3 3" /></svg>
          快速交易F12
        </Pill>
        <Pill $w={84}><GridIcon />多窗口</Pill>
        <NoticeSlot>
          <Pill $w={100} aria-label="自定义"><GridIcon s={16} /></Pill>
          <Notice>查看39条新消息<X size={20} strokeWidth={1.5} /></Notice>
        </NoticeSlot>
        <IconBtn aria-label="消息"><Mail size={21} strokeWidth={1.7} color={C.gold} /><Badge>39</Badge></IconBtn>
        <IconBtn aria-label="主页"><svg width="20" height="20" viewBox="0 0 20 20" fill="none" stroke="currentColor" strokeWidth="1.700"><path d="M10 1L1 10h4v9h10v-9h4z" /></svg></IconBtn>
        <IconBtn aria-label="返回"><Undo2 size={21} strokeWidth={1.8} /></IconBtn>
        <IconBtn aria-label="换肤"><ShirtIcon s={19} /></IconBtn>
        <IconBtn aria-label="缩放"><svg width="19" height="19" viewBox="0 0 19 19" fill="none" stroke="currentColor" strokeWidth="1.700"><path d="M1 8V1h17v17h-8M1 10h8v8H1z" /></svg></IconBtn>
        <IconBtn aria-label="最小化"><Minus size={20} strokeWidth={1.7} /></IconBtn>
        <IconBtn aria-label="还原"><svg width="17" height="17" viewBox="0 0 17 17" fill="none" stroke="currentColor" strokeWidth="1.700"><path d="M1 4h11v12H1zM4 4V1h12v12h-4" /></svg></IconBtn>
        <IconBtn aria-label="关闭"><X size={20} strokeWidth={1.5} /></IconBtn>
      </TitleBar>

      <NavBar>
        {navs.map(([n, d, w]) => <NavItem key={n} $w={w}>{n}{d && <Tri />}</NavItem>)}
        <ChevronsRight size={18} color="#999" strokeWidth={1.5} />
        <NavEnd><button>打开导航</button><button>返回</button></NavEnd>
      </NavBar>

      <Body>
        <Gutter $w={11}><Handle /><Meter /></Gutter>
        <Side>
          {sides.map(([t, lh], k) => <SideTab key={k} $lh={lh} $on={k === 1}>{t.map((c, j) => <span key={j}>{c}</span>)}</SideTab>)}
        </Side>

        <Center>
          <Toolbar>
            <Group>{periods.map(([n, w, d]) => <Tool key={n} $w={w} $on={n === '日线'} $drop={d}>{n}{d && <Tri />}</Tool>)}</Group>
            <Group>
              <Tool $w={28} aria-label="放大"><Plus size={20} /></Tool>
              <Tool $w={28} aria-label="缩小"><Minus size={20} /></Tool>
              <Tool $w={61} $drop>复权<Tri /></Tool>
              <Tool $w={61} $drop>叠加<Tri /></Tool>
              <Tool $w={60}>画线</Tool>
              <Tool $w={60}>经典</Tool>
              <Tool $w={60}>隐藏<svg width="11" height="10" viewBox="0 0 11 10" fill="currentColor"><path d="M0 0l5 5-5 5zM6 0l5 5-5 5z" /></svg></Tool>
              <Tool $w={29} aria-label="全屏"><svg width="17" height="17" viewBox="0 0 17 17" fill="none" stroke="currentColor" strokeWidth="1.500"><path d="M1 6V1h5M1 1l5 5M11 1h5v5M16 1l-5 5M1 11v5h5M1 16l5-5M11 16h5v-5M16 16l-5-5" /></svg></Tool>
            </Group>
          </Toolbar>

          <Legend $h={28}>
            <Under>
              <Val $c={C.gold}>COMEX白银</Val><Val $c={C.mute}>(日线,不复权)</Val><Val $c={C.mute}>收盘价顾比大殷线</Val>
              {maVals.map(([t, c]) => <Val key={t} $c={c}>{t}<Arrow dir="d" /></Val>)}
              <Val $c="#ffff00">C</Val>
              <MaButton>设置均线<Tri $s={3} /></MaButton>
            </Under>
            <AxisGap />
          </Legend>
          <KLine />
          <Legend $h={28}>
            <LegendText>
              <Val $c={C.mute}>好用的MACD</Val>
              {macdVals.map(([t, c, d]) => <Val key={t} $c={c}>{t}<Arrow dir={d} /></Val>)}
              <LegendEnd><button>改参数</button><button>加指标</button><button>换指标</button><Square aria-label="关闭指标"><X size={15} strokeWidth={1} /></Square></LegendEnd>
            </LegendText>
            <AxisGap />
          </Legend>
          <Macd />
          <DateRow>
            <Square aria-label="向前"><ChevronsLeft size={18} strokeWidth={1.5} /></Square>
            <DatePlot viewBox="63 845 1330 24">
              {dates.map(([t, x]) => <text key={t} x={x} y="866" fill={t === '2022' ? '#fff' : C.mute}>{t}</text>)}
            </DatePlot>
            <Square aria-label="向后"><ChevronsRight size={18} strokeWidth={1.5} /></Square>
          </DateRow>
          <Templates>
            <TplGroup><TplBtn $fill>指标</TplBtn><TplBtn $fill>模板</TplBtn><TplBtn>保存</TplBtn><TplBtn>管理</TplBtn></TplGroup>
            {templates.map(t => <button key={t}>{t}</button>)}
            <MoreBtn>更多</MoreBtn>
          </Templates>
          <HSplit><Up /></HSplit>
          <Related>
            <RelTab>关联品种</RelTab>
            <svg width="19" height="20" viewBox="0 0 19 20" fill="none" stroke="#a0a0a0"><path d="M.5 9V.5h18V9" strokeDasharray="2 1" /><path d="M.5 10.500h18v9H.5zM9.500 10V3M6.500 6l3-3 3 3" strokeWidth="1.500" /></svg>
          </Related>
        </Center>

        <Gutter $w={9}><Handle /></Gutter>

        <Quote>
          <QHead>
            <QName><Side2 $left /><span>SI00Y</span><h1>COMEX白银</h1><Side2 /></QName>
            <QPrice><strong>21.595</strong><Change>{'- 0.336\n- 1.53%'}</Change><AddBtn aria-label="加自选"><Plus size={16} strokeWidth={3} /></AddBtn></QPrice>
          </QHead>
          <QLine $h={34}><Info size={17} strokeWidth={1.5} />当前品种行情延时展示</QLine>
          <QLine $h={30}>卖一<b>21.600</b><em>8</em></QLine>
          <QLine $h={30}>买一<b>21.595</b><em>3</em></QLine>
          <QLine $h={32} $bg={C.panel}>分时成交<Detail>详</Detail></QLine>
          <TradeWrap>
            <Trades>
              <thead><tr><th>时间</th><th>价格</th><th>现量</th></tr></thead>
              <tbody>
                {trades.map(([t, p, a, v, up], k) => (
                  <tr key={k}>
                    <Time $full={t.length > 3}>{t}</Time>
                    <Price><div>{p}{a ? <TradeArrow up={a === 'u'} /> : <i />}</div></Price>
                    <Vol $up={up}>{v}</Vol>
                  </tr>
                ))}
              </tbody>
            </Trades>
            <ScrollBar><i /><span /><i /></ScrollBar>
          </TradeWrap>
          <Tip role="status">可在设置中开启或关闭持仓分组<X size={18} strokeWidth={1.3} /></Tip>
        </Quote>
      </Body>

      <Ticker>
        <Cell>沪</Cell>
        <IndexCell><span>3255.55</span><Down>29.28</Down><span>-0.89%</span>
          <Counts><Tint $c={C.red}>914</Tint><Tint $c="#ddd">51</Tint><span>1175</span></Counts></IndexCell>
        <Cell $c={C.cyan}><span><b>5119.7</b>亿</span></Cell>
        <Cell $c={C.green}><span>沪股通 <b>-67.5</b>亿</span></Cell>
        <Cell>深</Cell>
        <IndexCell><span>11999.31</span><Down>35.84</Down><span>-0.30%</span>
          <Counts><Tint $c={C.red}>1492</Tint><Tint $c="#ddd">84</Tint><span>1093</span></Counts></IndexCell>
        <Cell $c={C.cyan}><span><b>5789.6</b>亿</span></Cell>
        <Cell $c={C.green}><span>深股通 <b>-37.1</b>亿</span></Cell>
        <Cell>创业板指</Cell>
        <IndexCell><span>2546.49</span><Down>9.98</Down><span>-0.39%</span></IndexCell>
      </Ticker>

      <News>
        <NewsBtn><svg width="17" height="17" viewBox="0 0 17 17" fill="none" stroke="currentColor" strokeWidth="1.500"><path d="M12 6V1H1v10l3 3h3M4 4h6M4 7h5M8 14l1-4 6-6 2 2-6 6z" /></svg>留言</NewsBtn>
        <NewsBtn><svg width="17" height="17" viewBox="0 0 17 17" fill="none" stroke="currentColor" strokeWidth="1.500"><path d="M1 1h15v11H1zM4 16h9M8.500 12v4M9.500 3L7 7h3L8 10" /></svg>最快主站</NewsBtn>
        <Live href="#live">24小时直播:</Live>
        <Feed>
          <span>帛能源于佛山投资成立新能源公司&emsp;&ensp;</span><time>14:30&ensp;</time><span>&nbsp;华友钴业投资成立进出口公司&emsp;&ensp;&ensp;</span>
          <time>14:26&ensp;</time><span>&nbsp;通胀爆表后赶紧找</span>
        </Feed>
        <Hot><i />世龙实业 打开涨停<a href="#all">[全部]</a></Hot>
        <Find><Search size={14} color="#aaa" /><input aria-label="搜索" /></Find>
        <Bell size={19} fill={C.gold} color={C.gold} />
        <Signal width="22" height="17" viewBox="0 0 22 17" fill="#3fe838"><path d="M0 12h5v5H0zM8 7h5v10H8zM16 1h5v16h-5z" /></Signal>
        <Clock><span>CN</span><span>06/13</span><span>15:00:42</span></Clock>
        <Ime>
          <ImeLogo width="32" height="34" viewBox="0 0 32 34"><g transform="rotate(-10 16 17)"><rect x="2" y="3" width="27" height="28" rx="4" fill="#f4511e" /><g transform="translate(0 2)"><SogouPath /></g></g></ImeLogo>
          <button>英</button>
          <button aria-label="标点"><svg width="12" height="14" viewBox="0 0 12 14" fill="currentColor"><circle cx="2" cy="3" r="2" /><path d="M8 6h3v4l-2 3H8l1-3H8z" /></svg></button>
          <button aria-label="表情"><svg width="16" height="16" viewBox="0 0 16 16"><circle cx="8" cy="8" r="8" fill="currentColor" /><path d="M5 4v3M11 4v3" stroke="#fff" strokeWidth="2" /><path d="M3.500 9h9q-1 4-4.500 4t-4.500-4z" fill="#fff" /></svg></button>
          <button aria-label="语音"><Mic size={17} fill="currentColor" /></button>
          <button aria-label="键盘"><svg width="16" height="14" viewBox="0 0 16 14" fill="none" stroke="currentColor" strokeWidth="1.800"><path d="M1 1h14v12H1z" /><path d="M3.500 4.500h9M3.500 7.300h9" strokeDasharray="2 1.500" /><path d="M5 10.300h6" /></svg></button>
          <button aria-label="账户"><svg width="14" height="16" viewBox="0 0 14 16" fill="#c4c4c4"><circle cx="6" cy="4" r="4" /><path d="M0 16v-4q0-3 3-3h6v7zM9 8h5v8H9z" /></svg></button>
          <button aria-label="皮肤"><ShirtIcon s={15} fill="currentColor" /></button>
          <button aria-label="工具箱"><svg width="14" height="14" viewBox="0 0 14 14" fill="currentColor"><rect width="6" height="6" rx="1.500" /><circle cx="11" cy="3" r="3" /><rect y="8" width="6" height="6" rx="1.500" /><rect x="8" y="8" width="6" height="6" rx="1.500" /></svg></button>
        </Ime>
      </News>

      <Taskbar>
        <Weather>
          <svg width="30" height="26" viewBox="0 0 30 26"><circle cx="21" cy="9" r="8" fill="#f6a81c" /><path d="M6 24q-6-1-6-6t6-6q1-6 7-6t8 6q5 1 5 6t-5 6z" fill="#d9e6f5" /><path d="M25 6h4v9h-4zM25 16h4v4h-4z" fill="#d8232a" /></svg>
          <div>30°C<br /><span>多云</span></div>
        </Weather>
        <Apps>{apps.map(a => <AppBtn key={a.name} aria-label={a.name} $bg={a.bg} $dot={a.dot}>{a.icon}</AppBtn>)}</Apps>
        <Tray>
          <TrayText $w={34}>73℃<br />CPU</TrayText>
          <ChevronUp size={20} strokeWidth={1.7} />
          <TrayIme>英</TrayIme>
          <Sogou s={22} />
          <TrayIcons>
            <Wifi size={20} strokeWidth={1.7} />
            <Volume2 size={20} strokeWidth={1.5} />
            <svg width="20" height="18" viewBox="0 0 20 18" fill="none" stroke="#222" strokeWidth="1.700"><path d="M2 1v3M6 1v3M1 4h6v3q-3 3-6 0zM4 9v3M8 4h9v12H5v-3M18.500 8v5" /><path d="M8 6h8v9H8z" fill="#222" stroke="none" /></svg>
          </TrayIcons>
          <TrayText $w={72} $right>15:00<br />2022/6/13</TrayText>
        </Tray>
      </Taskbar>
    </Page>
  );
}
